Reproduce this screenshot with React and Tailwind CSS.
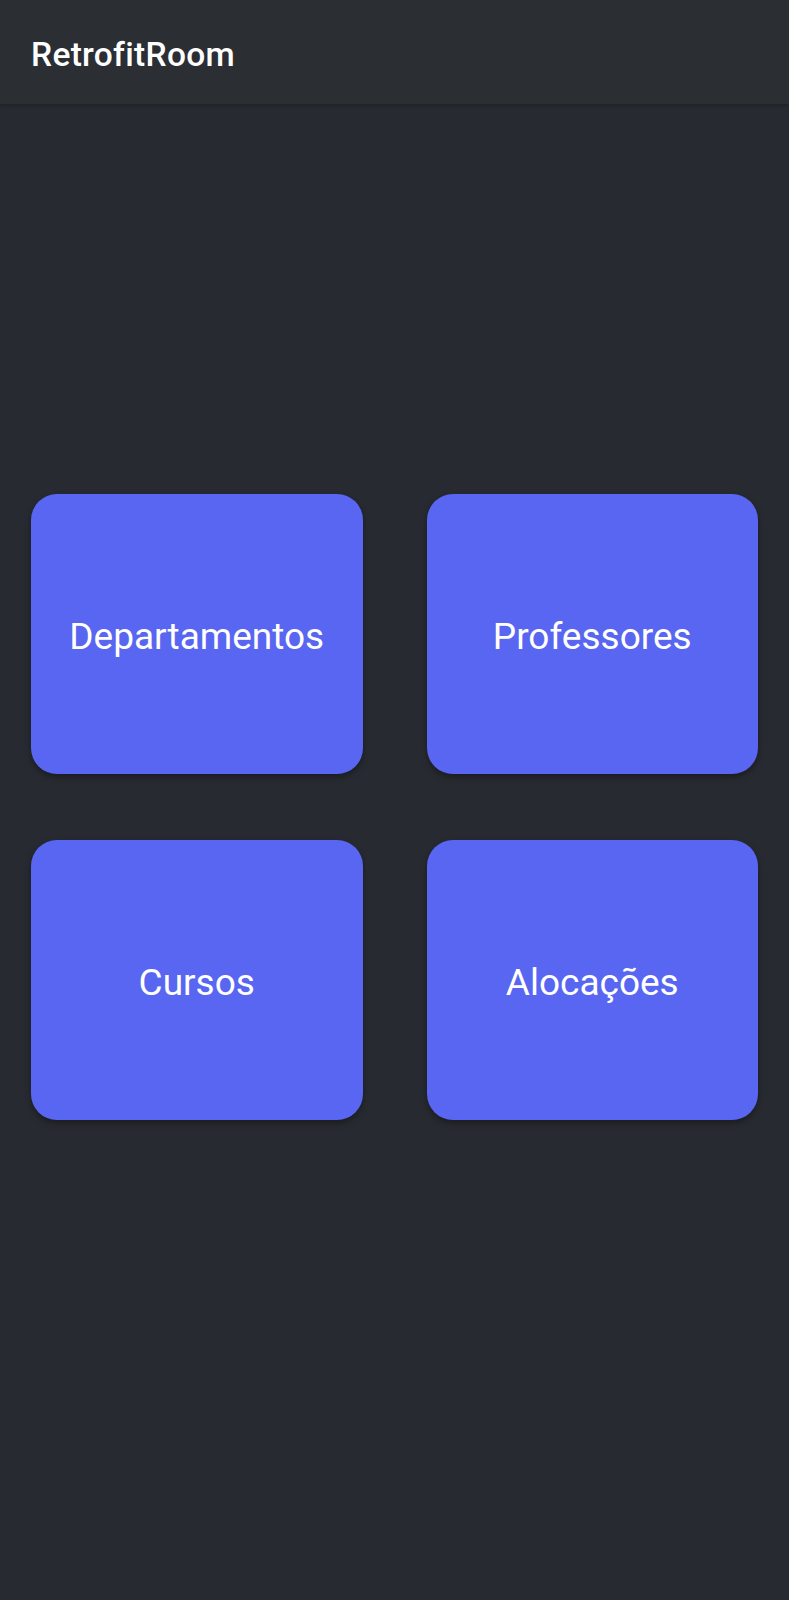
const items = ['Departamentos', 'Professores', 'Cursos', 'Alocações'];

export default function App() {
  return (
    <div className="min-h-[1600px] bg-[#272a30]" style={{ fontFamily: 'Roboto, "Noto Sans", sans-serif' }}>
      <header className="h-[104px] flex items-center px-[31px] pt-[6px] bg-[#2b2e33] shadow-[0_2px_3px_rgba(0,0,0,0.18)]">
        <h1 className="text-[33.5px] font-medium text-white tracking-[0.3px]">RetrofitRoom</h1>
      </header>

      <main className="pt-[390px] px-[31px]">
        <div className="grid grid-cols-2 gap-x-[64px] gap-y-[66px]">
          {items.map((label) => (
            <button
              key={label}
              className="h-[280px] pt-[6px] rounded-[26px] bg-[#5866f2] text-white text-[37px] flex items-center justify-center shadow-[0_3px_6px_rgba(0,0,0,0.35)]"
            >
              {label}
            </button>
          ))}
        </div>
      </main>
    </div>
  );
}
